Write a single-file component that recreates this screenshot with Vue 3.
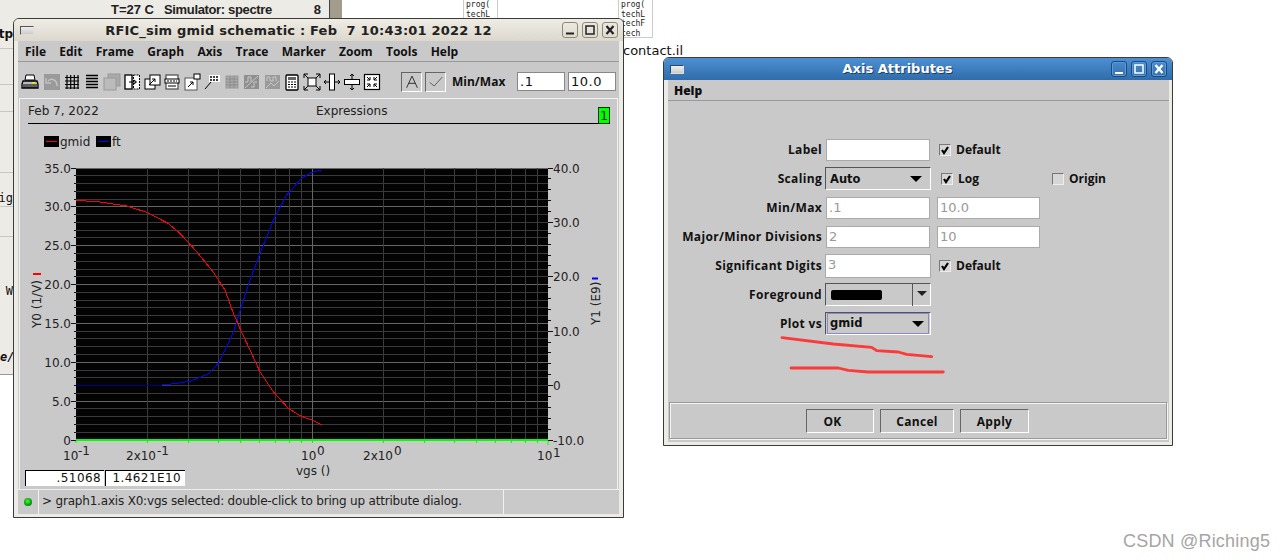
<script setup>
const plotLeft = 76
const plotRight = 548
const plotTop = 168
const plotBottom = 440
const decade = (plotRight - plotLeft) / 2

const xAt = (v) => plotLeft + decade * Math.log10(v / 0.1)

const vLines = []
for (const base of [0.1, 1]) {
  for (let m = 1; m < 10; m++) {
    if (m === 1 && base === 0.1) continue
    vLines.push({ x: xAt(base * m), major: m === 1 })
  }
}

const hLines = []
for (let i = 0; i <= 35; i++) {
  hLines.push({ y: plotTop + (i * (plotBottom - plotTop)) / 35, major: i % 5 === 0 })
}

const leftLabels = ['35.0', '30.0', '25.0', '20.0', '15.0', '10.0', '5.0', '0'].map((t, i) => ({
  t,
  y: plotTop + (i * (plotBottom - plotTop)) / 7
}))

const rightTicks = []
for (let i = 0; i <= 25; i++) {
  rightTicks.push({ y: plotTop + (i * (plotBottom - plotTop)) / 25, major: i % 5 === 0 })
}
const rightLabels = ['40.0', '30.0', '20.0', '10.0', '0', '-10.0'].map((t, i) => ({
  t,
  y: plotTop + (i * (plotBottom - plotTop)) / 5
}))

const gmid = '76,200.3 100,202 126.7,206 146.7,212.3 168,223.3 180,233.3 196.7,251.7 213,271.7 225,290 233.3,313 240.7,330 250,350 260,371.7 273.3,391.7 288.3,408.3 300,415.7 311.7,420 321.7,424.7'
const ftFlat = '76,385.3 162,385'
const ft = '162,385 176.7,383.3 190,381.3 208.3,374 218.3,363.3 228.3,343.3 234,330 238.3,316.7 248.3,285 260,253.3 275,216.7 286.7,195 301.7,178.3 311.7,172.3 321.7,170'

const menus = ['File', 'Edit', 'Frame', 'Graph', 'Axis', 'Trace', 'Marker', 'Zoom', 'Tools', 'Help']

const sideRows = [
  { h: 31, t: 'utp', cls: 'bold' },
  { h: 36 },
  { h: 27 },
  { h: 61 },
  { h: 34, t: 'ig' },
  { h: 30 },
  { h: 108, t: 'W', plain: true },
  { h: 30, t: 'e/s', cls: 'ital' }
]
</script>

<template>
  <div class="desk">
    <!-- stuff behind the windows -->
    <div class="bgwin">
      <div class="bg-top">
        <span>T=27 C</span><span class="sim">Simulator: spectre</span><span class="num">8</span>
      </div>
      <div
        v-for="(r, i) in sideRows"
        :key="i"
        class="side-row"
        :class="[r.cls, { plain: r.plain }]"
        :style="{ height: r.h + 'px' }"
      >{{ r.t }}</div>
    </div>
    <div class="strip"></div>
    <div class="paper p1"><span>prog(</span><span>techL</span></div>
    <div class="paper p2"><span>prog(</span><span>techL</span><span>techF</span><span>tech</span></div>
    <div class="file-name">contact.il</div>

    <!-- plot window -->
    <div class="win plot-win">
      <div class="title">
        <span class="win-menu"></span>
        <span class="title-text">RFIC_sim gmid schematic : Feb&nbsp;&nbsp;7 10:43:01 2022 12</span>
        <div class="ctrls">
          <span class="ctrl"><svg viewBox="0 0 14 14"><path d="M3 10.5h8" stroke="#222" stroke-width="2" /></svg></span>
          <span class="ctrl"><svg viewBox="0 0 14 14"><rect x="3" y="3" width="8" height="8" fill="none" stroke="#222" stroke-width="1.5" /></svg></span>
          <span class="ctrl"><svg viewBox="0 0 14 14"><path d="M3.5 3l7 8M10.5 3l-7 8" stroke="#222" stroke-width="2.2" /></svg></span>
        </div>
      </div>
      <div class="body">
        <div class="menubar">
          <span v-for="m in menus" :key="m">{{ m }}</span>
        </div>
        <div class="toolbar">
          <div class="icons">
            <svg class="ti first" viewBox="0 0 20 20">
              <path d="M6 3h8l1 5H5z" fill="#fff" stroke="#000" />
              <path d="M3 9h14l1 3v4H2v-4z" fill="#bbb" stroke="#000" stroke-width="1.3" />
              <path d="M3 13h14M3 15h14" stroke="#000" />
              <rect x="12" y="10" width="3" height="1.5" fill="#ee0" />
            </svg>
            <svg class="ti" viewBox="0 0 20 20">
              <rect x="2" y="2" width="16" height="16" fill="#9a9a9a" />
              <path d="M15 14c0-7-6-8-9-5M4 6v5h5" fill="none" stroke="#c4c4c4" stroke-width="1.4" />
            </svg>
            <svg class="ti" viewBox="0 0 20 20">
              <path d="M5 3v14M8.7 3v14M12.3 3v14M16 3v14M3 5.5h14M3 9h14M3 12.5h14M3 16h14" stroke="#000" stroke-width="1.2" />
            </svg>
            <svg class="ti" viewBox="0 0 20 20">
              <path d="M4 3.5h12M4 6.5h12M4 9.5h12M4 12.5h12M4 15.5h12" stroke="#000" stroke-width="1.4" />
            </svg>
            <svg class="ti" viewBox="0 0 20 20">
              <rect x="6" y="2" width="12" height="12" fill="#aaa" stroke="#999" />
              <rect x="2" y="6" width="12" height="12" fill="#bbb" stroke="#999" />
            </svg>
            <svg class="ti" viewBox="0 0 20 20">
              <rect x="3" y="3" width="7" height="14" fill="#fff" stroke="#000" stroke-width="1.3" />
              <rect x="11.5" y="3" width="6" height="14" fill="#fff" stroke="#000" stroke-dasharray="2 1" />
              <path d="M7 10h7M12 8l2.500 2-2.500 2" fill="none" stroke="#000" />
            </svg>
            <svg class="ti" viewBox="0 0 20 20">
              <rect x="3" y="7" width="10" height="10" fill="#fff" stroke="#000" />
              <rect x="8" y="3" width="10" height="10" fill="#fff" stroke="#000" />
              <path d="M7 13l6-6M10 7h3v3" fill="none" stroke="#000" />
            </svg>
            <svg class="ti" viewBox="0 0 20 20">
              <rect x="4" y="3" width="12" height="14" fill="#fff" stroke="#555" stroke-width="1.3" />
              <rect x="3" y="7" width="14" height="4" fill="#fff" stroke="#000" />
              <path d="M5 9h10" stroke="#000" stroke-dasharray="2 1" />
              <path d="M6 14h8" stroke="#000" />
            </svg>
            <svg class="ti" viewBox="0 0 20 20">
              <rect x="3" y="6" width="12" height="12" fill="#fff" stroke="#555" />
              <rect x="12" y="2" width="6" height="5" fill="#fff" stroke="#000" />
              <path d="M6 15l5-5M8 10h3v3" fill="none" stroke="#000" />
            </svg>
            <svg class="ti" viewBox="0 0 20 20">
              <rect x="7" y="3" width="11" height="7" fill="#fff" />
              <path d="M8 5h2M11 5h2M14 5h2M8 8h2M11 8h2M14 8h2" stroke="#000" stroke-width="1.4" />
              <path d="M9 10l-6 7" stroke="#000" />
            </svg>
            <svg class="ti" viewBox="0 0 20 20">
              <rect x="4" y="4" width="12" height="12" fill="#aaa" stroke="#9a9a9a" />
              <path d="M4 7h12M4 10h12M4 13h12M8 4v12M12 4v12" stroke="#8c8c8c" />
            </svg>
            <svg class="ti" viewBox="0 0 20 20">
              <rect x="2" y="3" width="15" height="14" fill="#8f8f8f" />
              <path d="M3 10h3v-5h3v5M9 15h3v-5h3M3 16L16 4" fill="none" stroke="#c8c8c8" />
            </svg>
            <svg class="ti" viewBox="0 0 20 20">
              <rect x="3" y="3" width="15" height="14" fill="#9a9a9a" />
              <path d="M5 9V5h3v4h3V5h3v4M4 16l5-5 3 3 5-5" fill="none" stroke="#c8c8c8" />
            </svg>
            <svg class="ti" viewBox="0 0 20 20">
              <rect x="4" y="3" width="12" height="15" rx="1" fill="#fff" stroke="#000" stroke-width="1.3" />
              <rect x="6" y="5" width="8" height="3" fill="#666" />
              <path d="M6 10h2M9 10h2M12 10h2M6 12.500h2M9 12.500h2M12 12.500h2M6 15h2M9 15h2M12 15h2" stroke="#000" />
            </svg>
            <svg class="ti" viewBox="0 0 20 20">
              <rect x="6" y="6" width="8" height="8" fill="#fff" stroke="#000" />
              <path d="M6 6L2 2M14 6l4-4M6 14l-4 4M14 14l4 4M2 6V2h4M14 2h4v4M2 14v4h4M18 14v4h-4" fill="none" stroke="#000" />
            </svg>
            <svg class="ti" viewBox="0 0 20 20">
              <rect x="7.500" y="2" width="5" height="16" fill="#fff" stroke="#000" />
              <path d="M7 10H2M4 8l-2 2 2 2M13 10h5M16 8l2 2-2 2" fill="none" stroke="#000" />
            </svg>
            <svg class="ti" viewBox="0 0 20 20">
              <rect x="2.500" y="7.500" width="15" height="5" fill="#fff" stroke="#000" />
              <path d="M10 7V2M8 4l2-2 2 2M10 13v5M8 16l2 2 2-2" fill="none" stroke="#000" />
            </svg>
            <svg class="ti" viewBox="0 0 20 20">
              <rect x="2.500" y="2.500" width="15" height="15" fill="#fff" stroke="#000" stroke-width="1.2" />
              <path d="M5 5l3 3M8 5v3H5M15 5l-3 3M12 5v3h3M5 15l3-3M8 15v-3H5M15 15l-3-3M12 15v-3h3" fill="none" stroke="#000" />
            </svg>
          </div>
          <span class="mode-btn">
            <svg viewBox="0 0 20 16"><path d="M4 15L10 2l6 13M6.500 10h7" fill="none" stroke="#222" /></svg>
          </span>
          <span class="mode-btn">
            <svg viewBox="0 0 20 16"><path d="M3 9l5 4 9-10" fill="none" stroke="#555" /></svg>
          </span>
          <b class="minmax">Min/Max</b>
          <span class="tb-input first-in">.1</span>
          <span class="tb-input">10.0</span>
        </div>

        <div class="panel">
          <div class="panel-head">
            <span>Feb 7, 2022</span>
            <span class="expr">Expressions</span>
            <span class="badge">1</span>
          </div>
          <svg class="chart" viewBox="20 124 597 364" width="597" height="364">
            <rect x="44" y="136" width="15" height="11" fill="#000" />
            <path d="M46 141.500h11" stroke="#f00" />
            <text x="60" y="145.500">gmid</text>
            <rect x="96" y="136" width="15" height="11" fill="#000" />
            <path d="M98 141.500h11" stroke="#00f" />
            <text x="112" y="145.500">ft</text>

            <rect :x="plotLeft" :y="plotTop" :width="plotRight - plotLeft" :height="plotBottom - plotTop" fill="#030303" />
            <line
              v-for="l in hLines"
              :key="'h' + l.y"
              :x1="plotLeft"
              :x2="plotRight"
              :y1="l.y"
              :y2="l.y"
              :stroke="l.major ? '#666' : '#3a3a3a'"
            />
            <line
              v-for="l in vLines"
              :key="'v' + l.x"
              :x1="l.x"
              :x2="l.x"
              :y1="plotTop"
              :y2="plotBottom"
              :stroke="l.major ? '#666' : '#3a3a3a'"
            />
            <polyline :points="ftFlat" fill="none" stroke="#00008c" />
            <polyline :points="ft" fill="none" stroke="#00f" />
            <polyline :points="gmid" fill="none" stroke="#f00" />
            <line :x1="plotLeft" :x2="plotRight" :y1="440" :y2="440" stroke="#0f0" stroke-width="2" />
            <line v-for="l in vLines" :key="'g' + l.x" :x1="l.x" :x2="l.x" y1="440" y2="443" stroke="#0f0" />
            <path d="M76 440v3M548 440v5" stroke="#0f0" />

            <line
              v-for="l in hLines"
              :key="'lt' + l.y"
              :x1="l.major ? 71 : 74"
              :x2="plotLeft"
              :y1="l.y"
              :y2="l.y"
              stroke="#111"
            />
            <line
              v-for="l in rightTicks"
              :key="'rt' + l.y"
              x1="548"
              :x2="l.major ? 553 : 551"
              :y1="l.y"
              :y2="l.y"
              stroke="#111"
            />
            <text v-for="l in leftLabels" :key="l.t" x="71" :y="l.y + 4.5" text-anchor="end">{{ l.t }}</text>
            <text v-for="l in rightLabels" :key="'r' + l.t" x="553" :y="l.y + 4.5">{{ l.t }}</text>

            <text x="63" y="460">10</text><text x="78" y="455">-1</text>
            <text x="126" y="460">2x10</text><text x="157" y="455">-1</text>
            <text x="301" y="460">10</text><text x="317" y="455">0</text>
            <text x="363" y="460">2x10</text><text x="394" y="455">0</text>
            <text x="537" y="460">10</text><text x="553" y="457">1</text>
            <text x="296" y="475">vgs ()</text>

            <text class="rot" transform="translate(41 328) rotate(-90)">Y0 (1/V)</text>
            <path d="M33 274h8" stroke="#f00" stroke-width="2" />
            <text class="rot" transform="translate(600 325) rotate(-90)">Y1 (E9)</text>
            <path d="M592 278.500h6" stroke="#00f" stroke-width="2" />
          </svg>
          <div class="readouts">
            <span class="read">.51068</span>
            <span class="read second">1.4621E10</span>
          </div>
        </div>

        <div class="status">
          <div class="led-cell"><span class="led"></span></div>
          <div class="msg">&gt; graph1.axis X0:vgs selected: double-click to bring up attribute dialog.</div>
          <div class="rest"></div>
        </div>
      </div>
    </div>

    <!-- dialog -->
    <div class="win dialog">
      <div class="title blue">
        <span class="win-menu"></span>
        <span class="title-text">Axis Attributes</span>
        <div class="ctrls">
          <span class="ctrl"><svg viewBox="0 0 14 14"><path d="M3 11h8" stroke="#fff" stroke-width="2" /></svg></span>
          <span class="ctrl"><svg viewBox="0 0 14 14"><rect x="3" y="3" width="8" height="8" fill="none" stroke="#fff" stroke-width="1.5" /></svg></span>
          <span class="ctrl"><svg viewBox="0 0 14 14"><path d="M3.500 3l7 8M10.500 3l-7 8" stroke="#fff" stroke-width="2.4" /></svg></span>
        </div>
      </div>
      <div class="body dlg-body">
        <div class="dlg-menu"><b>Help</b></div>
        <div class="form">
          <label>Label</label>
          <span class="field"></span>
          <span class="chk"><i class="box"><svg viewBox="0 0 10 10"><path d="M2 5l2 3 4-6" fill="none" stroke="#000" stroke-width="2.200" /></svg></i>Default</span>
          <span></span>

          <label>Scaling</label>
          <span class="select">Auto<i class="arrow"></i></span>
          <span class="chk log"><i class="box"><svg viewBox="0 0 10 10"><path d="M2 5l2 3 4-6" fill="none" stroke="#000" stroke-width="2.200" /></svg></i>Log</span>
          <span class="chk origin"><i class="box"></i>Origin</span>

          <label>Min/Max</label>
          <span class="field dim">.1</span>
          <span class="field dim wide">10.0</span>
          <span></span>

          <label>Major/Minor Divisions</label>
          <span class="field dim">2</span>
          <span class="field dim wide">10</span>
          <span></span>

          <label>Significant Digits</label>
          <span class="field dim tall">3</span>
          <span class="chk"><i class="box"><svg viewBox="0 0 10 10"><path d="M2 5l2 3 4-6" fill="none" stroke="#000" stroke-width="2.200" /></svg></i>Default</span>
          <span></span>

          <label>Foreground</label>
          <span class="select color"><i class="swatch"></i><em class="arrow-box"><i class="arrow"></i></em></span>
          <span></span>
          <span></span>

          <label>Plot vs</label>
          <span class="select focus"><span class="focus-in">gmid<i class="arrow"></i></span></span>
          <span></span>
          <span></span>
        </div>
        <svg class="scribble" viewBox="0 0 180 50" width="180" height="50">
          <path d="M12 4.700 L63.300 11 L101.700 14.300 L106.700 17.700 L128.300 19 L136.700 21.300 L161.700 23.700" />
          <path d="M21 35 L68.300 35 L78.300 37.300 L98.300 39 L173.300 39" />
        </svg>
        <div class="btn-row">
          <button class="btn ok">OK</button>
          <button class="btn cancel">Cancel</button>
          <button class="btn apply">Apply</button>
        </div>
      </div>
    </div>

    <div class="mark">CSDN @Riching5</div>
  </div>
</template>

<style>
html, body {
  background: #fff;
  overflow: hidden;
}
</style>

<style scoped>
.desk {
  position: relative;
  width: 1286px;
  height: 560px;
  overflow: hidden;
  background: #fff;
  font-family: "DejaVu Sans", sans-serif;
  font-size: 12px;
  color: #111;
}

/* background leftovers */
.bgwin {
  position: absolute;
  left: 0;
  top: 0;
  width: 329px;
  height: 375px;
  background: #edebe5;
  border-right: 1px solid #444;
  box-sizing: content-box;
}
.bg-top {
  display: flex;
  height: 18px;
  padding-left: 111px;
  align-items: center;
  font-family: "Liberation Sans", sans-serif;
  font-size: 13px;
  font-weight: bold;
  color: #222;
}
.sim {
  margin-left: 10px;
  letter-spacing: -0.35px;
}
.num {
  margin-left: 42px;
}
.side-row {
  box-sizing: border-box;
  width: 13px;
  overflow: hidden;
  display: flex;
  justify-content: flex-end;
  align-items: flex-end;
  white-space: nowrap;
  border-bottom: 1px solid #c8c8c2;
  font-family: "DejaVu Sans Mono", monospace;
  line-height: 15px;
}
.side-row.plain {
  border-bottom: 0;
  align-items: center;
}
.side-row.bold {
  font-weight: bold;
  font-family: "DejaVu Sans", sans-serif;
  padding-bottom: 6px;
}
.side-row.ital {
  justify-content: flex-start;
  font-weight: bold;
  font-style: italic;
  padding-bottom: 9px;
  border-bottom: 1px solid #999;
}
.strip {
  position: absolute;
  left: 330px;
  top: 0;
  width: 12px;
  height: 18px;
  background: #a29c8c;
}
.paper {
  position: absolute;
  top: -3px;
  box-sizing: border-box;
  width: 35px;
  padding: 2px 0 0 2px;
  display: flex;
  flex-direction: column;
  background: #fff;
  border: 1px solid #ccc;
  font-family: "DejaVu Sans Mono", monospace;
  font-size: 8px;
  line-height: 9.700px;
  color: #222;
  letter-spacing: 0;
}
.p1 {
  left: 463px;
  height: 22px;
}
.p2 {
  left: 618px;
  height: 41px;
}
.file-name {
  position: absolute;
  left: 623px;
  top: 43px;
  font-size: 13px;
  line-height: 15px;
  color: #111;
}

/* windows */
.win {
  position: absolute;
  box-sizing: border-box;
  display: flex;
  flex-direction: column;
  background: #edebe5;
  border: 1px solid #3c3b38;
  border-radius: 6px 6px 0 0;
}
.plot-win {
  left: 13px;
  top: 18px;
  width: 611px;
  height: 500px;
}
.title {
  position: relative;
  flex: none;
  display: flex;
  align-items: center;
  justify-content: center;
  height: 22px;
  background: linear-gradient(#efece5, #dcd8cd);
  border-radius: 5px 5px 0 0;
  font-weight: bold;
  font-size: 13px;
  color: #222;
}
.title-text {
  margin-right: 40px;
  letter-spacing: 0.2px;
}
.win-menu {
  position: absolute;
  left: 6px;
  top: 7px;
  width: 14px;
  height: 9px;
  box-sizing: border-box;
  background: linear-gradient(#eee, #ccc);
  border: 1px solid #555;
  border-right-color: #ddd;
  border-bottom-color: #ddd;
}
.ctrls {
  position: absolute;
  right: 5px;
  top: 3px;
  display: flex;
  gap: 4px;
}
.ctrl {
  box-sizing: border-box;
  width: 16px;
  height: 16px;
  border: 1px solid #8f8a78;
  border-radius: 3px;
}
.ctrl svg {
  display: block;
  width: 14px;
  height: 14px;
}
.body {
  flex: 1;
  min-height: 0;
  display: flex;
  flex-direction: column;
  margin: 0 4px 3px;
  background: #c9c9c9;
}
.menubar {
  flex: none;
  display: flex;
  height: 21px;
  align-items: center;
  padding-left: 7px;
  padding-top: 1px;
  border-bottom: 1px solid #999;
  font-family: "Open Sans", sans-serif;
  font-weight: bold;
  font-size: 12px;
  color: #111;
  box-sizing: border-box;
  gap: 13.300px;
}
.toolbar {
  flex: none;
  display: flex;
  align-items: center;
  height: 36px;
  padding-top: 3px;
  box-sizing: border-box;
}
.icons {
  display: flex;
  margin-left: 2px;
  margin-right: 19px;
}
.ti {
  width: 20px;
  height: 20px;
  display: block;
}
.ti.first {
  margin-right: 2px;
}
.mode-btn {
  box-sizing: border-box;
  width: 21px;
  height: 20px;
  margin-right: 3px;
  border: 1px solid;
  border-color: #666 #fff #fff #666;
  display: flex;
  align-items: center;
  justify-content: center;
}
.mode-btn svg {
  width: 18px;
  height: 15px;
}
.minmax {
  margin-left: 3px;
  width: 65px;
  font-family: "Open Sans", sans-serif;
  font-size: 12px;
}
.tb-input {
  box-sizing: border-box;
  width: 48px;
  height: 19px;
  margin-right: 3px;
  padding-left: 2px;
  line-height: 17px;
  background: #fff;
  border: 1px solid #888;
  font-size: 13px;
  letter-spacing: 0.5px;
}
.first-in {
  margin-left: 0;
}
.panel {
  position: relative;
  flex: none;
  height: 391px;
  margin-left: 1px;
  box-sizing: border-box;
  border: 1px solid #f2f2f2;
  border-bottom: 0;
  width: 599px;
}
.panel-head {
  position: relative;
  display: flex;
  height: 25px;
  box-sizing: border-box;
  margin: 0 7px 0 8px;
  align-items: center;
  padding-bottom: 1px;
  border-bottom: 1px solid #000;
  letter-spacing: 0;
  color: #222;
}
.expr {
  position: absolute;
  left: 288px;
}
.badge {
  position: absolute;
  right: 0;
  top: 8px;
  box-sizing: border-box;
  width: 12px;
  height: 17px;
  background: #0f0;
  border: 1px solid #030;
  text-align: center;
  font-size: 12px;
  line-height: 16px;
}
.chart {
  display: block;
  margin-left: 0;
  font-size: 12px;
  fill: #111;
}
.chart line,
.chart polyline {
  shape-rendering: crispEdges;
}
.chart text {
  font-family: "DejaVu Sans", sans-serif;
  font-size: 12px;
  fill: #222;
}
.readouts {
  position: absolute;
  left: 5px;
  top: 371px;
  display: flex;
  gap: 1px;
}
.read {
  box-sizing: border-box;
  width: 79px;
  height: 16px;
  padding-right: 3px;
  text-align: right;
  background: #fff;
  border-top: 1px solid #000;
  border-left: 1px solid #000;
  line-height: 15px;
  font-size: 12px;
  letter-spacing: 0.4px;
}
.read.second {
  padding-right: 4px;
  width: 80px;
}
.status {
  flex: 1;
  display: flex;
  border-top: 1px solid #eee;
}
.led-cell {
  width: 20px;
  flex: none;
  display: flex;
  align-items: center;
  justify-content: center;
  border-right: 1px solid #f2f2f2;
}
.led {
  width: 8px;
  height: 8px;
  border-radius: 50%;
  background: radial-gradient(circle at 45% 40%, #5e5, #0a0 55%, #050);
}
.msg {
  flex: none;
  width: 465px;
  padding-left: 3px;
  box-sizing: border-box;
  border-right: 1px solid #f2f2f2;
  line-height: 23px;
  color: #222;
  white-space: nowrap;
  letter-spacing: -0.19px;
}

/* dialog */
.dialog {
  left: 663px;
  top: 57px;
  width: 510px;
  height: 389px;
}
.title.blue {
  height: 22px;
  padding-bottom: 1px;
  box-sizing: border-box;
  background: linear-gradient(#4d90d2, #2f6cab);
  color: #fff;
  text-shadow: 1px 1px 0 #1c3f66;
}
.blue .title-text {
  margin-right: 41px;
  letter-spacing: 0;
}
.blue .ctrl {
  border-color: #1d4a7a;
  box-shadow: inset 0 0 0 1px #5d9ad8;
}
.blue .win-menu {
  border-color: #234a73;
  border-right-color: #ddd;
  border-bottom-color: #ddd;
}
.dlg-body {
  position: relative;
  margin: 0 3px 3px 4px;
  background: #c9c9c9;
  font-family: "Open Sans", sans-serif;
  font-weight: bold;
}
.dlg-menu {
  height: 21px;
  box-sizing: border-box;
  border-bottom: 1px solid #999;
  padding-left: 6px;
  line-height: 22px;
}
.form {
  display: grid;
  grid-template-columns: 158px 111px 103px 1fr;
  grid-auto-rows: 29px;
  align-items: center;
  margin-top: 34px;
}
.form label {
  text-align: right;
  padding-right: 4px;
  white-space: nowrap;
  letter-spacing: 0.33px;
}
.field {
  box-sizing: border-box;
  display: block;
  width: 104px;
  height: 22px;
  padding-left: 2px;
  background: #fff;
  border: 1px solid #aaa;
  font-family: "DejaVu Sans", sans-serif;
  font-weight: normal;
  font-size: 13px;
  line-height: 20px;
}
.dim {
  color: #999;
}
.wide {
  width: 103px;
}
.tall {
  height: 24px;
  margin-left: -1px;
  width: 106px;
}
.chk {
  display: flex;
  align-items: center;
  gap: 5px;
  margin-left: 2px;
}
.chk.log {
  margin-left: 4px;
}
.chk.origin {
  margin-left: 12px;
}
.box {
  box-sizing: border-box;
  display: block;
  width: 12px;
  height: 12px;
  background: #d6d6d6;
  border: 1px solid;
  border-color: #777 #eee #eee #777;
}
.box svg {
  display: block;
  width: 10px;
  height: 10px;
}
.select {
  position: relative;
  box-sizing: border-box;
  display: flex;
  align-items: center;
  width: 106px;
  height: 23px;
  margin-left: -1px;
  padding-left: 4px;
  border: 1px solid;
  border-color: #555 #fff #fff #555;
  background: #c9c9c9;
  font-family: "DejaVu Sans", sans-serif;
  font-weight: bold;
  font-size: 11.500px;
  line-height: 20px;
}
.arrow {
  position: absolute;
  right: 8px;
  top: 8px;
  width: 0;
  height: 0;
  border-left: 6px solid transparent;
  border-right: 6px solid transparent;
  border-top: 6px solid #000;
}
.color {
  padding-left: 5px;
}
.swatch {
  display: block;
  width: 51px;
  height: 10px;
  border-radius: 2px;
  background: #000;
}
.arrow-box {
  position: absolute;
  right: 0;
  top: -1px;
  bottom: -1px;
  width: 18px;
  box-sizing: border-box;
  border-left: 1px solid #555;
}
.arrow-box .arrow {
  right: 3px;
  top: 8px;
  border-left-width: 5px;
  border-right-width: 5px;
  border-top-width: 5px;
  border-top-color: #222;
}
.focus {
  padding: 1px;
}
.focus-in {
  position: relative;
  display: block;
  flex: 1;
  height: 19px;
  padding-left: 2px;
  border: 1px solid #8a8ac8;
  line-height: 18px;
}
.focus-in .arrow {
  right: 4px;
  top: 7px;
}
.scribble {
  position: absolute;
  left: 102px;
  top: 253px;
  fill: none;
  stroke: #f33;
  stroke-width: 2.800;
  stroke-linejoin: round;
  stroke-linecap: round;
  opacity: 0.95;
}
.btn-row {
  position: absolute;
  left: 1px;
  right: 2px;
  top: 322px;
  height: 37px;
  box-sizing: border-box;
  border: 1px solid #9a9a9a;
  box-shadow: inset 1px 1px 0 #f4f4f4, 1px 1px 0 #f4f4f4;
  display: flex;
  align-items: center;
  padding-left: 136px;
  gap: 6px;
}
.btn {
  box-sizing: border-box;
  height: 24px;
  padding: 1px 0 0;
  background: #c9c9c9;
  border: 1px solid;
  border-color: #666 #fff #fff #666;
  font-family: "Open Sans", sans-serif;
  font-weight: bold;
  font-size: 12px;
  letter-spacing: 0.3px;
  color: #111;
}
.ok {
  width: 68px;
  padding-right: 15px;
}
.cancel {
  width: 74px;
}
.apply {
  width: 69px;
}
.mark {
  position: absolute;
  left: 1123px;
  top: 530px;
  font-family: "Liberation Sans", sans-serif;
  font-size: 18px;
  letter-spacing: 0.2px;
  line-height: 22px;
  color: #a5a5a5;
  white-space: nowrap;
}
</style>
